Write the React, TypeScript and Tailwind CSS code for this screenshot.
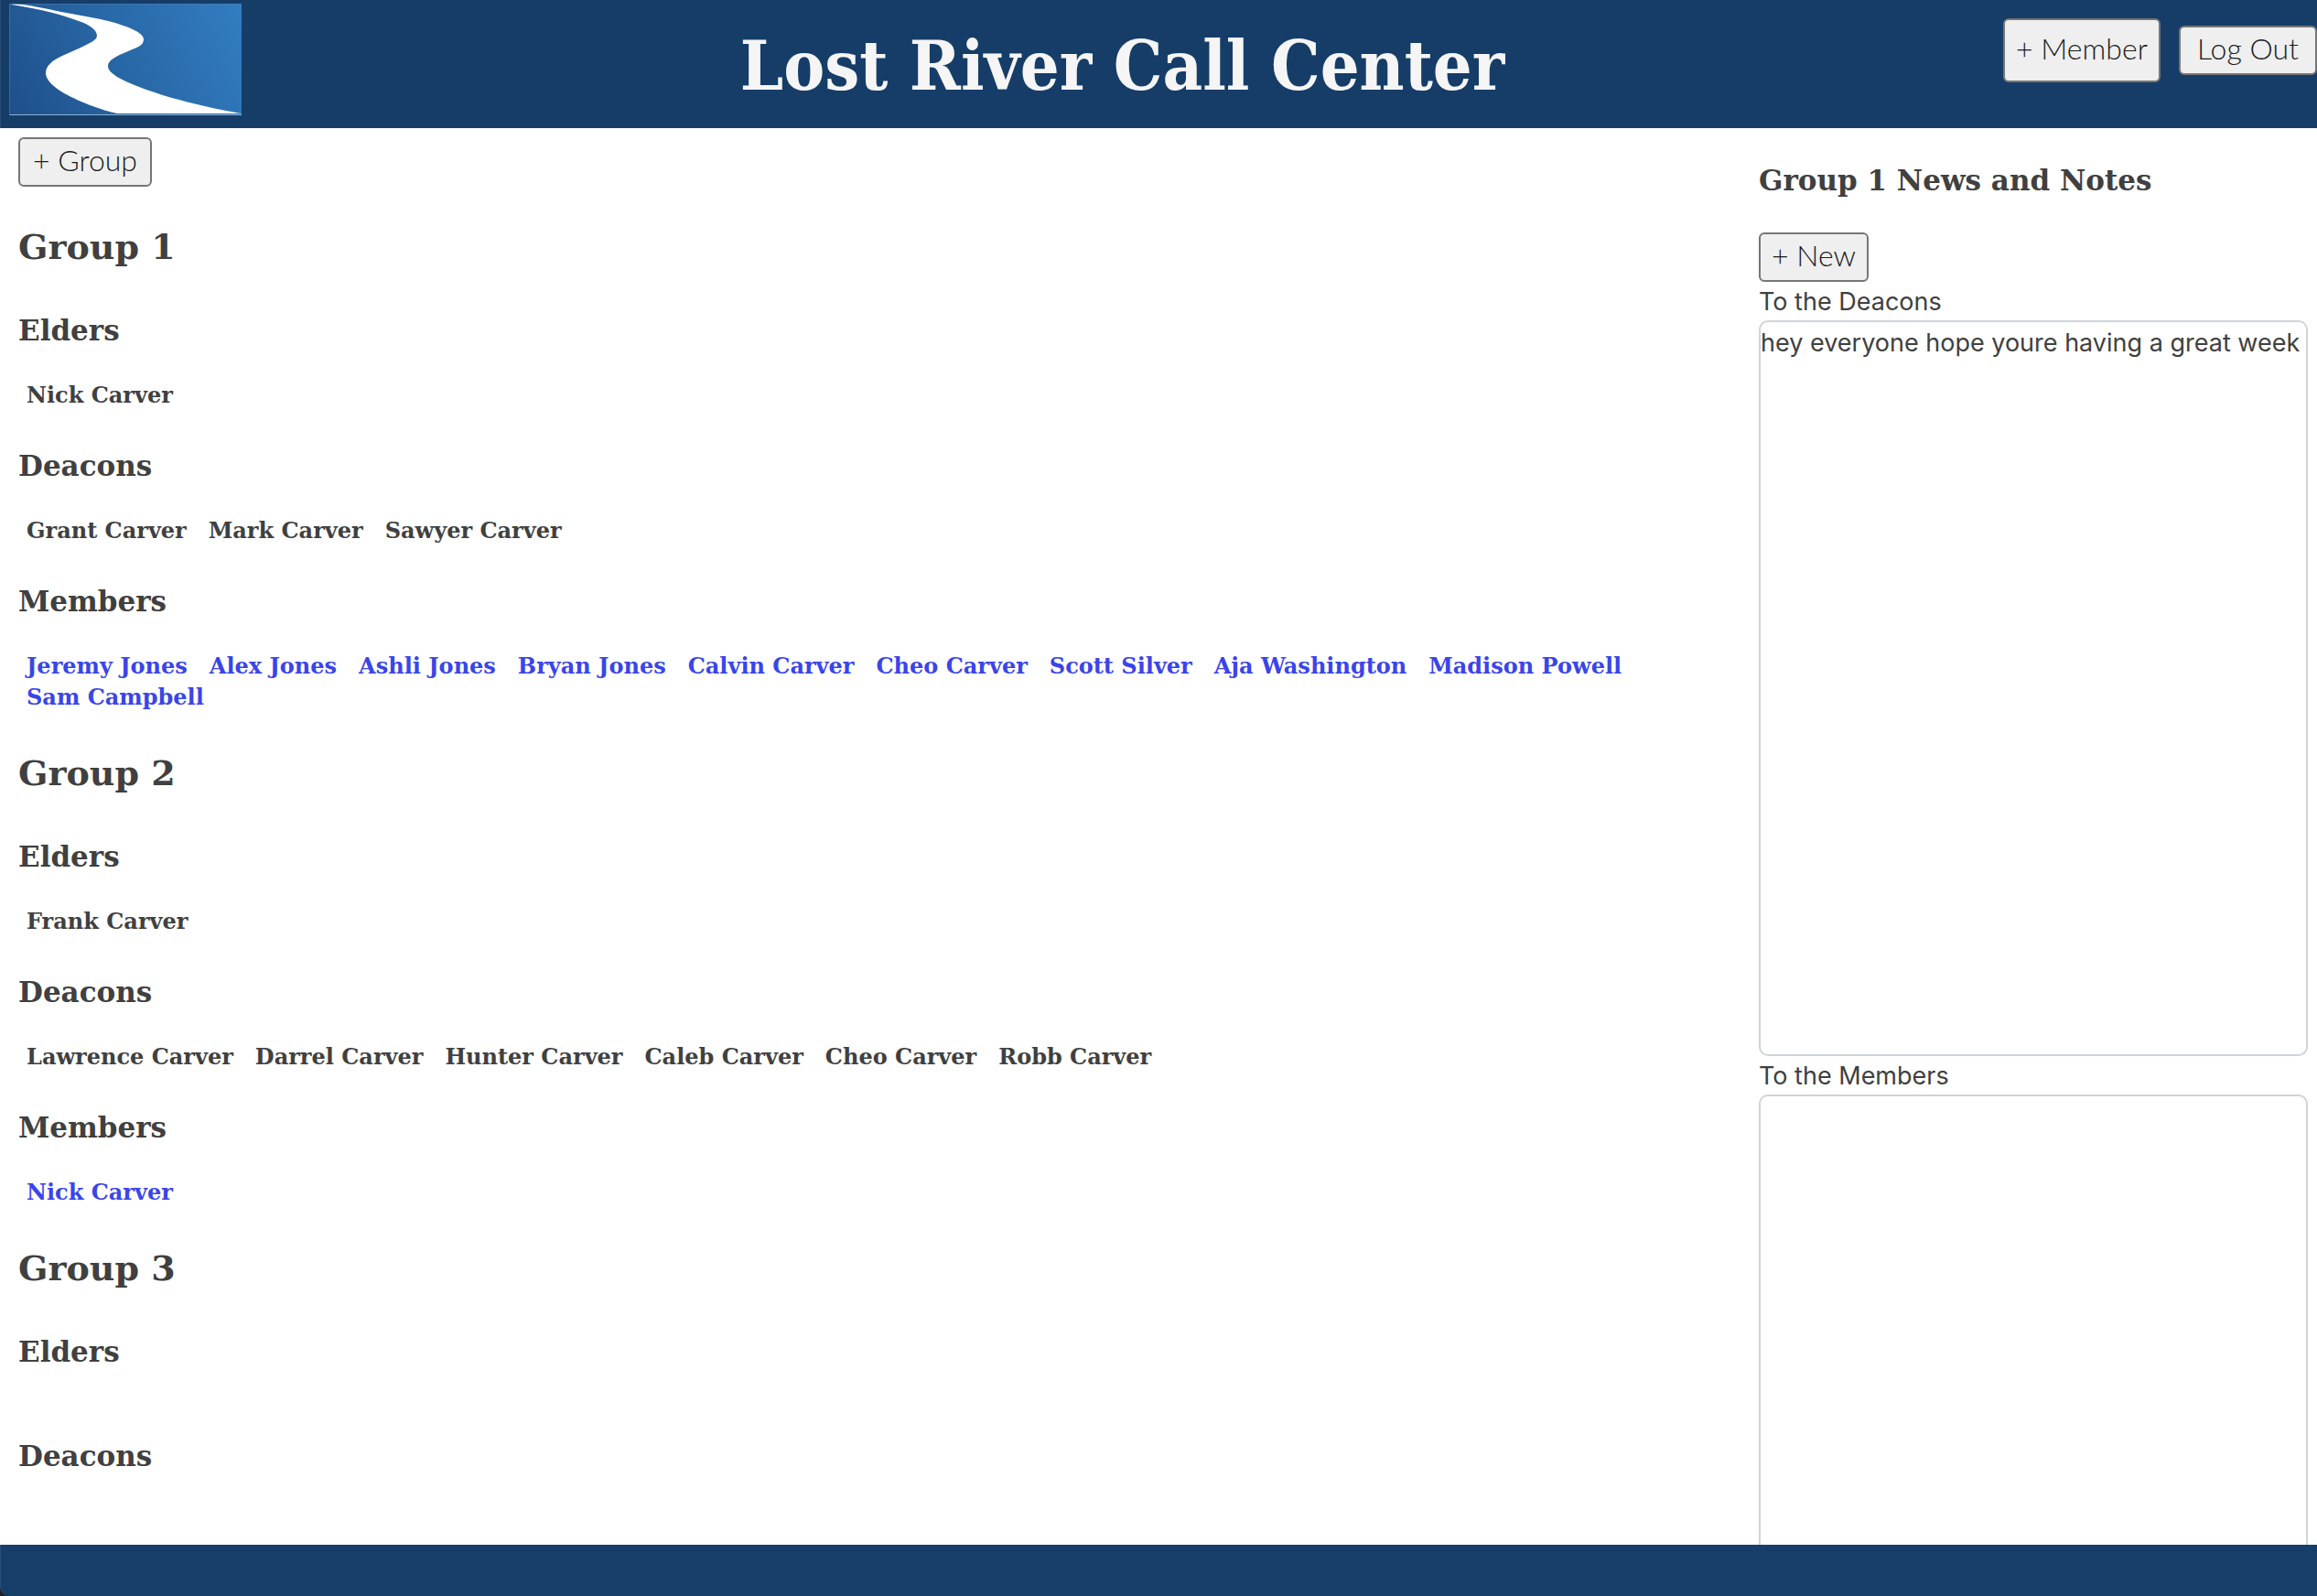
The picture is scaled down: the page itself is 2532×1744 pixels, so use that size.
import type { ReactNode } from "react";

type Person = string;

interface Group {
  name: string;
  elders: Person[];
  deacons: Person[];
  members?: Person[];
}

const groups: Group[] = [
  {
    name: "Group 1",
    elders: ["Nick Carver"],
    deacons: ["Grant Carver", "Mark Carver", "Sawyer Carver"],
    members: [
      "Jeremy Jones",
      "Alex Jones",
      "Ashli Jones",
      "Bryan Jones",
      "Calvin Carver",
      "Cheo Carver",
      "Scott Silver",
      "Aja Washington",
      "Madison Powell",
      "Sam Campbell",
    ],
  },
  {
    name: "Group 2",
    elders: ["Frank Carver"],
    deacons: [
      "Lawrence Carver",
      "Darrel Carver",
      "Hunter Carver",
      "Caleb Carver",
      "Cheo Carver",
      "Robb Carver",
    ],
    members: ["Nick Carver"],
  },
  { name: "Group 3", elders: [], deacons: [] },
];

function Button({ children, className = "px-3.5 pt-1 pb-2" }: { children: ReactNode; className?: string }) {
  return (
    <button
      type="button"
      className={`rounded-md border-2 border-[#767676] bg-[#efefef] font-['Lato',sans-serif] text-[32px] leading-[38px] font-light whitespace-nowrap text-[#1c1c1c] ${className}`}
    >
      {children}
    </button>
  );
}

function Logo() {
  return (
    <svg viewBox="0 0 254 122" className="h-[122px] w-[254px] shrink-0" role="img" aria-label="Lost River logo">
      <defs>
        <linearGradient id="sky" x1="0" y1="122" x2="254" y2="0" gradientUnits="userSpaceOnUse">
          <stop offset="0" stopColor="#1f4f8a" />
          <stop offset="0.5" stopColor="#2868a6" />
          <stop offset="1" stopColor="#327dc2" />
        </linearGradient>
      </defs>
      <rect width="254" height="122" fill="url(#sky)" />
      <path
        d="M3 0 C22 1 38 5 57 9 C72 12 86 14 100 17 C126 23 147 31 147 39 C147 46 139 48 130 52 C117 57 108 62 108 68 C108 76 121 82 137 89 C166 101 212 113 254 120 L118 120 C103 117 73 106 57 96 C46 89 40 82 40 76 C40 68 47 62 58 57 L76 49 C88 43 96 40 96 35 C96 29 88 23 76 19 C58 12 34 6 3 1 Z"
        fill="#fff"
      />
      <path d="M0 121.5H254" stroke="#8fb0d0" />
      <path d="M0 0.5H254M0.5 0V122" stroke="#4a7db0" strokeOpacity="0.6" fill="none" />
    </svg>
  );
}

function Roster({ title, people, linked = false }: { title: string; people: Person[]; linked?: boolean }) {
  return (
    <section>
      <h3 className="mb-[34px] text-[31px] leading-10">{title}</h3>
      <ul className="mb-10 flex flex-wrap gap-x-6 px-[9px] text-[24px] leading-[34px]">
        {people.map((person) => (
          <li key={person}>
            {linked ? (
              <a href="#member" className="text-[#3a45e8]">
                {person}
              </a>
            ) : (
              person
            )}
          </li>
        ))}
      </ul>
    </section>
  );
}

function Note({ id, label, text }: { id: string; label: string; text: string }) {
  return (
    <>
      <label htmlFor={id} className="block pt-0.5 leading-10">
        {label}
      </label>
      <textarea
        id={id}
        defaultValue={text}
        className="block h-[804px] w-full resize-none overflow-hidden rounded-[10px] border-2 border-[#ced4da] bg-white py-0.5 leading-[42px]"
      />
    </>
  );
}

export default function App() {
  return (
    <div className="flex h-screen flex-col overflow-hidden bg-white font-['DejaVu_Serif',serif] font-bold text-[#404040]">
      <header className="flex h-[140px] shrink-0 items-start justify-between border-l border-[#2a4d75] bg-[#153d68] pt-1 pl-[9px]">
        <Logo />
        <h1 className="self-center font-['DejaVu_Serif_Condensed','DejaVu_Serif',serif] text-[75px] leading-[80px] text-[#f5f5f5]">
          Lost River Call Center
        </h1>
        <div className="flex items-center gap-5 pt-4 font-normal">
          <Button className="px-3 pt-3 pb-4">+ Member</Button>
          <Button className="px-[18px] pt-1 pb-2">Log Out</Button>
        </div>
      </header>

      <main className="flex min-h-0 flex-1 justify-between gap-10 overflow-hidden pr-2.5 pl-5">
        <div className="min-w-0 flex-1 pt-2.5">
          <div className="mb-10 flex font-normal">
            <Button>+ Group</Button>
          </div>
          {groups.map((group) => (
            <article key={group.name}>
              <h2 className="mb-[45px] text-[38px] leading-[52px]">{group.name}</h2>
              <Roster title="Elders" people={group.elders} />
              <Roster title="Deacons" people={group.deacons} />
              {group.members && <Roster title="Members" people={group.members} linked />}
            </article>
          ))}
        </div>

        <aside className="w-[600px] shrink-0 pt-[37px] font-['Inter',sans-serif] text-[27px] font-normal">
          <h3 className="mb-[37px] font-['DejaVu_Serif',serif] text-[31px] leading-10 font-bold">
            Group 1 News and Notes
          </h3>
          <div className="flex">
            <Button className="px-3 pt-1 pb-2">+ New</Button>
          </div>
          <Note id="deacons-note" label="To the Deacons" text="hey everyone hope youre having a great week" />
          <Note id="members-note" label="To the Members" text="" />
        </aside>
      </main>

      <footer className="h-14 shrink-0 bg-[#202020]">
        <div className="h-full rounded-bl-[10px] border-l border-[#2a4d75] bg-[#173e69]" />
      </footer>
    </div>
  );
}
